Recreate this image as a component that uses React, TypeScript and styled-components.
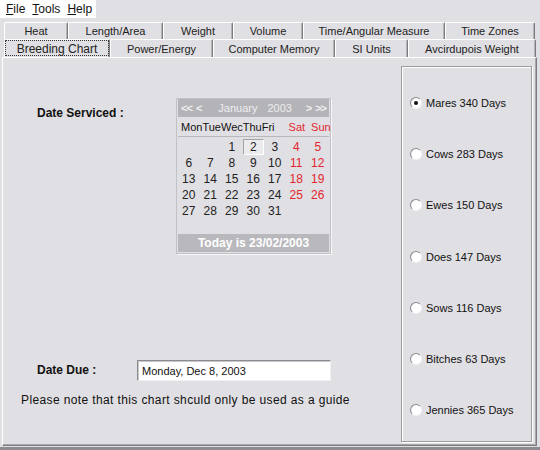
import React from "react";
import styled, { createGlobalStyle } from "styled-components";

const GlobalStyle = createGlobalStyle`
  body {
    margin: 0;
    background: #e0dfe3;
    font-family: "Liberation Sans", Arial, sans-serif;
  }
`;

const Window = styled.div`
  width: 540px;
  height: 450px;
  box-sizing: border-box;
  display: flex;
  flex-direction: column;
  background: #e0dfe3;
  border-bottom: 3px solid #8c8c90;
  padding-bottom: 1px;
  overflow: hidden;
  color: #111;
`;

const MenuBar = styled.div`
  height: 18px;
  display: flex;
`;

const MenuBlock = styled.div`
  width: 96px;
  background: #fff;
  display: flex;
  align-items: center;
  gap: 7px;
  padding-left: 6px;
  box-sizing: border-box;
  font-size: 12px;
`;

const MenuItem = styled.span`
  &::first-letter {
    text-decoration: underline;
  }
`;

const TabStrip = styled.div`
  margin-top: 4px;
  display: flex;
  flex-direction: column;
`;

const TabRow = styled.div<{ $h: number }>`
  display: flex;
  height: ${(p) => p.$h}px;
  padding-left: 4px;
`;

const Tab = styled.div<{ $w: number; $active?: boolean }>`
  width: ${(p) => p.$w}px;
  box-sizing: border-box;
  height: 100%;
  display: flex;
  align-items: center;
  justify-content: center;
  color: #222;
  background: #e0dfe3;
  border-top: 1px solid #fff;
  border-left: 1px solid #fff;
  border-right: 1px solid #7c7c80;
  border-radius: 2px 2px 0 0;
  box-shadow: inset -1px 0 #b4b4b8;
  outline: ${(p) => (p.$active ? "1px dotted #333" : "none")};
  outline-offset: -2px;
  font-size: ${(p) => (p.$active ? "12px" : "11px")};
`;

const Panel = styled.div`
  flex: 1;
  margin: 0 3px 0 2px;
  display: flex;
  border: 1px solid;
  border-color: #fff #7c7c80 #7c7c80 #fff;
  box-shadow: inset -1px -1px #a8a8ac;
`;

const LeftPane = styled.div`
  width: 398px;
  display: flex;
  flex-direction: column;
`;

const ServicedRow = styled.div`
  display: flex;
  margin-top: 40px;
  padding-left: 34px;
`;

const FieldLabel = styled.div<{ $w: number; $top: number }>`
  width: ${(p) => p.$w}px;
  margin-top: ${(p) => p.$top}px;
  font-size: 12px;
  font-weight: bold;
  color: #111;
`;

const Calendar = styled.div`
  width: 155px;
  height: 156px;
  box-sizing: border-box;
  border: 1px solid #c2c2c6;
  box-shadow: 1px 1px 0 #f6f6f8;
  padding: 0 1px 1px 1px;
  display: flex;
  flex-direction: column;
`;

const CalHeader = styled.div`
  height: 18px;
  background: #b4b4b8;
  color: #eeeef0;
  font-size: 11px;
  display: flex;
  align-items: center;
  padding: 0 3px;
`;

const Arrows = styled.span`
  font-weight: bold;
  letter-spacing: -1px;
  word-spacing: 2px;
`;

const HeadText = styled.span<{ $ml: number }>`
  margin-left: ${(p) => p.$ml}px;
`;

const RightArrows = styled(Arrows)`
  margin-left: auto;
`;

const DayNames = styled.div`
  height: 19px;
  display: flex;
  align-items: center;
  padding-left: 3px;
  font-size: 11px;
  color: #111;
  border-bottom: 1px solid #b8b8bc;
`;

const DayName = styled.span<{ $red?: boolean; $ml?: number }>`
  color: ${(p) => (p.$red ? "#e3262e" : "#111")};
  margin-left: ${(p) => p.$ml ?? 0}px;
`;

const DateGrid = styled.div`
  margin-top: 2px;
  display: grid;
  grid-template-columns: repeat(7, 21.5px);
  grid-auto-rows: 16px;
  font-size: 12px;
`;

const DateCell = styled.div<{ $red?: boolean; $sel?: boolean }>`
  display: flex;
  align-items: center;
  justify-content: center;
  box-sizing: border-box;
  color: ${(p) => (p.$red ? "#e3262e" : "#222")};
  border: 1px solid ${(p) => (p.$sel ? "#a4a4a8" : "transparent")};
  border-right-color: ${(p) => (p.$sel ? "#fff" : "transparent")};
  border-bottom-color: ${(p) => (p.$sel ? "#fff" : "transparent")};
  background: ${(p) => (p.$sel ? "#ebebee" : "transparent")};
`;

const CalFooter = styled.div`
  margin-top: auto;
  height: 18px;
  background: #b9b9bd;
  color: #fff;
  font-size: 12px;
  font-weight: bold;
  display: flex;
  align-items: center;
  justify-content: center;
`;

const DueRow = styled.div`
  display: flex;
  margin-top: 106px;
  padding-left: 34px;
`;

const DateInput = styled.div`
  width: 194px;
  height: 21px;
  box-sizing: border-box;
  background: #fff;
  border: 1px solid;
  border-color: #8c8c90 #f0f0f2 #f0f0f2 #8c8c90;
  box-shadow: inset 1px 1px #c8c8cc;
  font-size: 11px;
  display: flex;
  align-items: center;
  padding-left: 4px;
  color: #111;
`;

const Note = styled.div`
  margin-top: 12px;
  padding-left: 18px;
  font-size: 12px;
  letter-spacing: 0.38px;
  color: #111;
`;

const GroupBox = styled.div`
  width: 131px;
  margin: 8px 0 3px 0;
  box-sizing: border-box;
  border: 1px solid #9c9ca0;
  box-shadow: inset 1px 1px #fff, 1px 1px #fff;
  padding: 10px 0 0 8px;
  display: grid;
  grid-auto-rows: 51.3px;
  align-content: start;
`;

const RadioRow = styled.div`
  display: flex;
  align-items: center;
  gap: 4px;
  font-size: 11px;
  color: #111;
`;

const RadioDot = styled.span<{ $on?: boolean }>`
  width: 12px;
  height: 12px;
  box-sizing: border-box;
  border-radius: 50%;
  border: 1px solid;
  border-color: #8c8c90 #f4f4f6 #f4f4f6 #8c8c90;
  background: radial-gradient(circle at 60% 60%, #fff 55%, #e4e4e8);
  display: flex;
  align-items: center;
  justify-content: center;
  &::after {
    content: "";
    width: 4px;
    height: 4px;
    border-radius: 50%;
    background: ${(p) => (p.$on ? "#111" : "transparent")};
  }
`;

const topTabs = [
  { label: "Heat", w: 64 },
  { label: "Length/Area", w: 95 },
  { label: "Weight", w: 70 },
  { label: "Volume", w: 70 },
  { label: "Time/Angular Measure", w: 142 },
  { label: "Time Zones", w: 90 },
];

const frontTabs = [
  { label: "Breeding Chart", w: 106, active: true },
  { label: "Power/Energy", w: 103 },
  { label: "Computer Memory", w: 122 },
  { label: "SI Units", w: 73 },
  { label: "Avcirdupois Weight", w: 128 },
];

const animals = [
  "Mares 340 Days",
  "Cows 283 Days",
  "Ewes 150 Days",
  "Does 147 Days",
  "Sows 116 Days",
  "Bitches 63 Days",
  "Jennies 365 Days",
];

// January 2003 starts on a Wednesday
const cells: (number | null)[] = [null, null, ...Array.from({ length: 31 }, (_, i) => i + 1)];

export default function App() {
  return (
    <>
      <GlobalStyle />
      <Window>
        <MenuBar>
          <MenuBlock>
            <MenuItem>File</MenuItem>
            <MenuItem>Tools</MenuItem>
            <MenuItem>Help</MenuItem>
          </MenuBlock>
        </MenuBar>

        <TabStrip>
          <TabRow $h={17}>
            {topTabs.map((t) => (
              <Tab key={t.label} $w={t.w}>
                {t.label}
              </Tab>
            ))}
          </TabRow>
          <TabRow $h={18}>
            {frontTabs.map((t) => (
              <Tab key={t.label} $w={t.w} $active={t.active}>
                {t.label}
              </Tab>
            ))}
          </TabRow>
        </TabStrip>

        <Panel>
          <LeftPane>
            <ServicedRow>
              <FieldLabel $w={139} $top={8}>
                Date Serviced :
              </FieldLabel>
              <Calendar>
                <CalHeader>
                  <Arrows>{"<< <"}</Arrows>
                  <HeadText $ml={17}>January</HeadText>
                  <HeadText $ml={10}>2003</HeadText>
                  <RightArrows>{"> >>"}</RightArrows>
                </CalHeader>
                <DayNames>
                  <DayName>Mon</DayName>
                  <DayName>Tue</DayName>
                  <DayName>Wec</DayName>
                  <DayName>Thu</DayName>
                  <DayName>Fri</DayName>
                  <DayName $red $ml={14}>
                    Sat
                  </DayName>
                  <DayName $red $ml={6}>
                    Sun
                  </DayName>
                </DayNames>
                <DateGrid>
                  {cells.map((d, i) => (
                    <DateCell key={i} $red={i % 7 >= 5} $sel={d === 2}>
                      {d ?? ""}
                    </DateCell>
                  ))}
                </DateGrid>
                <CalFooter>Today is 23/02/2003</CalFooter>
              </Calendar>
            </ServicedRow>

            <DueRow>
              <FieldLabel $w={100} $top={3}>
                Date Due :
              </FieldLabel>
              <DateInput>Monday, Dec 8, 2003</DateInput>
            </DueRow>

            <Note>Please note that this chart shculd only be used as a guide</Note>
          </LeftPane>

          <GroupBox>
            {animals.map((a, i) => (
              <RadioRow key={a}>
                <RadioDot $on={i === 0} />
                {a}
              </RadioRow>
            ))}
          </GroupBox>
        </Panel>
      </Window>
    </>
  );
}
